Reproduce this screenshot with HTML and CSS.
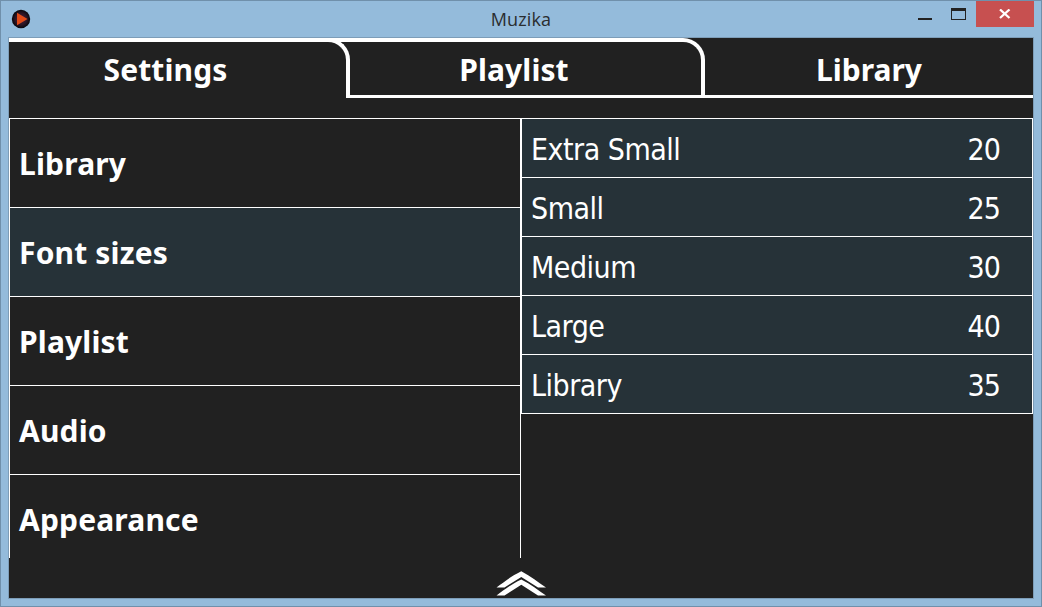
FILE: index.html
```html
<!DOCTYPE html>
<html lang="en">
<head>
<meta charset="utf-8">
<title>Muzika</title>
<link rel="stylesheet" href="styles.css">
</head>
<body>
<div class="window">
  <header class="titlebar">
    <svg class="app-icon" width="20" height="20" viewBox="0 0 20 20">
      <defs><radialGradient id="disc"><stop offset="0" stop-color="#51203a"/><stop offset=".65" stop-color="#2a1424"/><stop offset="1" stop-color="#07060b"/></radialGradient></defs>
      <circle cx="10" cy="10" r="9.2" fill="url(#disc)"/>
      <path d="M6 3.8 16.600 10 6 16.200z" fill="#e04a18"/>
    </svg>
    <span class="title">Muzika</span>
    <div class="controls">
      <svg width="60" height="26" viewBox="0 0 60 26" shape-rendering="crispEdges">
        <path d="M2 17h14v2H2z" fill="#222"/>
        <path d="M35 7h15v12H35zM36 10v8h13v-8z" fill="#222" fill-rule="evenodd"/>
      </svg>
      <div class="close">
        <svg width="12" height="10" viewBox="0 0 12 10"><path d="M1 .5 10.500 9M10.500 .5 1 9" stroke="#fff" stroke-width="2.300"/></svg>
      </div>
    </div>
  </header>
  <main class="client">
    <nav class="tabs">
      <div class="tab tab-active">Settings</div>
      <div class="tab tab-middle">Playlist</div>
      <div class="tab tab-last">Library</div>
    </nav>
    <div class="panels">
      <ul class="categories">
        <li>Library</li>
        <li class="selected">Font sizes</li>
        <li>Playlist</li>
        <li>Audio</li>
        <li>Appearance</li>
      </ul>
      <ul class="sizes">
        <li><span>Extra Small</span><span>20</span></li>
        <li><span>Small</span><span>25</span></li>
        <li><span>Medium</span><span>30</span></li>
        <li><span>Large</span><span>40</span></li>
        <li><span>Library</span><span>35</span></li>
      </ul>
    </div>
    <footer class="drawer">
      <svg width="50" height="26" viewBox="0 0 50 26" fill="#fff">
        <path d="M0.500 17.500C8 12 15 6.200 25.300 1.200C35 6.200 42 12 50 17.500H42L25.300 7L8.500 17.500z"/>
        <path d="M0.500 25.500C8 20 15 14.200 25.300 9.400C35 14.200 42 20 50 25.500H42L25.300 14.800L8.500 25.500z"/>
      </svg>
    </footer>
  </main>
</div>
</body>
</html>
```

FILE: styles.css
```css
* { box-sizing: border-box; }
body { margin: 0; }
ul { list-style: none; margin: 0; padding: 0; }
svg { display: block; }

.window {
  width: 1042px;
  height: 607px;
  background: #94bbdb;
  border: 1px solid #7090ab;
  padding: 0 7px 7px;
}

.titlebar {
  height: 36px;
  display: grid;
  grid-template-columns: 120px 1fr 120px;
}
.app-icon { margin: 8px 0 0 3px; }
.title {
  text-align: center;
  font: 18px/36px "Open Sans", "Noto Sans", sans-serif;
  letter-spacing: 0.15px;
  color: #2a2d30;
}
.controls { display: flex; justify-content: flex-end; height: 26px; }
.close {
  width: 58px;
  background: #c75050;
  padding: 8px 0 0 23px;
}

.client {
  height: 562px;
  border: 1px solid #7d9db8;
  background: #212121;
  color: #fff;
  font: 30px/36px "Noto Sans", "DejaVu Sans", sans-serif;
  display: flex;
  flex-direction: column;
}

.tabs {
  height: 80px;
  display: grid;
  grid-template-columns: 341px 355px 328px;
  font-weight: 700;
}
.tab {
  height: 60px;
  display: flex;
  justify-content: center;
  border-bottom: 3px solid #fff;
}
.tab-active {
  border-top: 4px solid #fff;
  border-right: 4px solid #fff;
  border-bottom: 0;
  border-top-right-radius: 22px;
  padding: 10px 24px 0 0;
  letter-spacing: 0.1px;
}
.tab-middle {
  position: relative;
  border-top: 4px solid #fff;
  border-right: 4px solid #fff;
  border-top-right-radius: 22px;
  padding: 10px 19px 0 0;
  margin-left: -4px;
  letter-spacing: 0.1px;
}
/* Carries the top edge over the rounded corner of the previous tab. */
.tab-middle::before {
  content: "";
  position: absolute;
  top: -4px;
  left: -22px;
  width: 24px;
  height: 4px;
  background: #fff;
}
.tab-last { padding: 14px 0 0; }

.panels { height: 440px; display: flex; overflow: hidden; }
.categories { width: 512px; font-weight: 700; letter-spacing: 0.16px; }
.categories li {
  height: 90px;
  margin-bottom: -1px;
  border: 1px solid #fff;
  padding: 27px 0 0 9px;
}
.sizes {
  width: 512px;
  font-family: "DejaVu Sans Condensed", "DejaVu Sans", sans-serif;
  font-stretch: condensed;
  letter-spacing: -0.5px;
}
.sizes li {
  height: 60px;
  margin-bottom: -1px;
  border: 1px solid #fff;
  background: #263238;
  padding: 13px 32px 0 9px;
  display: flex;
  justify-content: space-between;
}
.sizes span:last-child { letter-spacing: -0.9px; }
.categories .selected { background: #263238; }

.drawer { display: flex; justify-content: center; padding-top: 12px; }
```
